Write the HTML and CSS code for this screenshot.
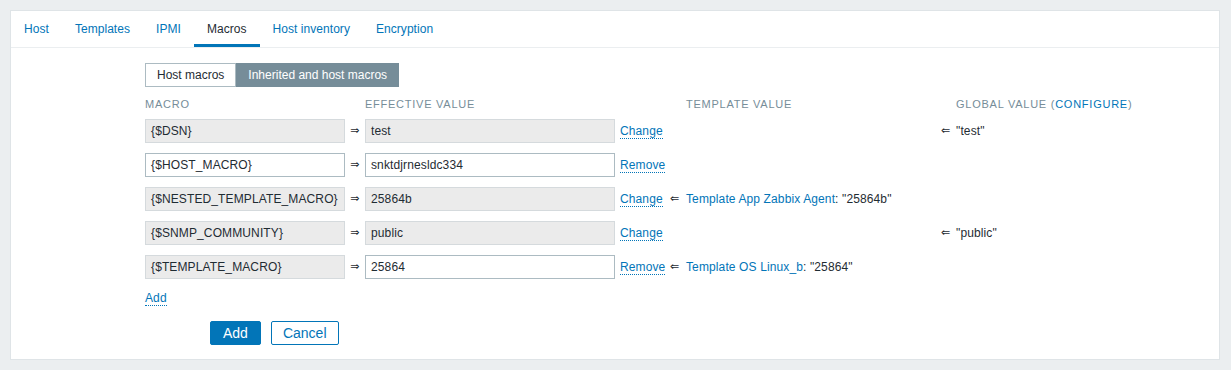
FILE: index.html
```html
<!DOCTYPE html>
<html>
<head>
<meta charset="utf-8">
<link rel="stylesheet" href="styles.css">
</head>
<body>
<div class="panel">
  <ul class="tabs">
    <li class="tab">Host</li>
    <li class="tab">Templates</li>
    <li class="tab">IPMI</li>
    <li class="tab active">Macros</li>
    <li class="tab">Host inventory</li>
    <li class="tab">Encryption</li>
  </ul>
  <div class="form">
    <div class="radio">
      <span class="radio-item">Host macros</span>
      <span class="radio-item selected">Inherited and host macros</span>
    </div>
    <div class="macros">
      <div class="th">Macro</div>
      <div class="th"></div>
      <div class="th">Effective value</div>
      <div class="th"></div>
      <div class="th"></div>
      <div class="th">Template value</div>
      <div class="th"></div>
      <div class="th">Global value (<span class="link-plain">configure</span>)</div>

      <div class="cell"><div class="field ro macro">{$DSN}</div></div>
      <div class="cell arrow">&rArr;</div>
      <div class="cell"><div class="field ro value">test</div></div>
      <div class="cell act"><span class="link">Change</span></div>
      <div class="cell larrow"></div>
      <div class="cell"></div>
      <div class="cell larrow">&lArr;</div>
      <div class="cell">"test"</div>

      <div class="cell"><div class="field macro">{$HOST_MACRO}</div></div>
      <div class="cell arrow">&rArr;</div>
      <div class="cell"><div class="field value">snktdjrnesldc334</div></div>
      <div class="cell act"><span class="link">Remove</span></div>
      <div class="cell larrow"></div>
      <div class="cell"></div>
      <div class="cell larrow"></div>
      <div class="cell"></div>

      <div class="cell"><div class="field ro macro">{$NESTED_TEMPLATE_MACRO}</div></div>
      <div class="cell arrow">&rArr;</div>
      <div class="cell"><div class="field ro value">25864b</div></div>
      <div class="cell act"><span class="link">Change</span></div>
      <div class="cell larrow">&lArr;</div>
      <div class="cell"><span class="link-plain">Template App Zabbix Agent</span>: "25864b"</div>
      <div class="cell larrow"></div>
      <div class="cell"></div>

      <div class="cell"><div class="field ro macro">{$SNMP_COMMUNITY}</div></div>
      <div class="cell arrow">&rArr;</div>
      <div class="cell"><div class="field ro value">public</div></div>
      <div class="cell act"><span class="link">Change</span></div>
      <div class="cell larrow"></div>
      <div class="cell"></div>
      <div class="cell larrow">&lArr;</div>
      <div class="cell">"public"</div>

      <div class="cell"><div class="field ro macro">{$TEMPLATE_MACRO}</div></div>
      <div class="cell arrow">&rArr;</div>
      <div class="cell"><div class="field value">25864</div></div>
      <div class="cell act"><span class="link">Remove</span></div>
      <div class="cell larrow">&lArr;</div>
      <div class="cell"><span class="link-plain">Template OS Linux_b</span>: "25864"</div>
      <div class="cell larrow"></div>
      <div class="cell"></div>
    </div>
    <div class="add-row"><span class="link">Add</span></div>
    <div class="buttons">
      <button class="btn primary">Add</button>
      <button class="btn secondary">Cancel</button>
    </div>
  </div>
</div>
</body>
</html>
```

FILE: styles.css
```css
* { box-sizing: border-box; }
body {
  margin: 0;
  background: #ebeef0;
  font-family: "Liberation Sans", Arial, "DejaVu Sans", sans-serif;
  font-size: 12px;
  line-height: 14px;
  letter-spacing: 0.12px;
  color: #1f2c33;
}
.panel {
  margin: 10px 11px 0 10px;
  background: #fff;
  border: 1px solid #dfe4e7;
}
.tabs {
  list-style: none;
  margin: 0;
  padding: 0;
  display: flex;
  height: 37px;
  border-bottom: 1px solid #ebeef0;
}
.tab {
  height: 36px;
  padding: 11px 13px 0;
  color: #0275b8;
  letter-spacing: 0.05px;
  border-bottom: 3px solid transparent;
}
.tab.active {
  color: #1f2c33;
  border-bottom-color: #0275b8;
}
.form {
  padding: 15px 0 14px 134px;
}
.radio {
  display: flex;
}
.radio-item {
  height: 24px;
  line-height: 22px;
  padding: 0 11px;
  letter-spacing: 0;
  border: 1px solid #acbbc2;
  background: #fff;
  color: #1f2c33;
}
.radio-item.selected {
  background: #768d99;
  border-color: #768d99;
  color: #fff;
}
.macros {
  margin-top: 6px;
  display: grid;
  grid-template-columns: 200px 20px 250px 55px 16px 255px 15px 1fr;
  align-items: center;
}
.th {
  padding: 4px 0 3px;
  font-size: 11px;
  letter-spacing: 0.75px;
  text-transform: uppercase;
  color: #768d99;
  white-space: nowrap;
}
.cell {
  padding: 5px 0;
  white-space: nowrap;
  min-height: 24px;
}
.field {
  height: 24px;
  line-height: 22px;
  padding: 0 5px;
  border: 1px solid #acbbc2;
  background: #fff;
  color: #1f2c33;
  overflow: hidden;
}
.field.ro {
  background: #ebebeb;
  border-color: #d5dadd;
}
.macro { width: 200px; }
.value { width: 250px; }
.arrow {
  text-align: center;
  font-family: "DejaVu Sans", sans-serif;
  font-size: 11px;
}
.larrow {
  padding-left: 0;
  font-family: "DejaVu Sans", sans-serif;
  font-size: 11px;
}
.act { padding-left: 5px; }
.link {
  color: #0275b8;
  border-bottom: 1px dotted #0275b8;
}
.link-plain { color: #0275b8; }
.add-row {
  padding: 7px 0 5px;
}
.buttons {
  margin-top: 11px;
  padding-left: 65px;
  display: flex;
  gap: 10px;
}
.btn {
  height: 24px;
  font-family: "Liberation Sans", Arial, sans-serif;
  font-size: 14px;
  line-height: 22px;
  padding: 0 11px;
  border: 1px solid #0275b8;
  border-radius: 2px;
  cursor: pointer;
}
.btn.primary {
  background: #0275b8;
  color: #fff;
  padding: 0 12px;
}
.btn.secondary {
  background: #fff;
  color: #0275b8;
}
```
